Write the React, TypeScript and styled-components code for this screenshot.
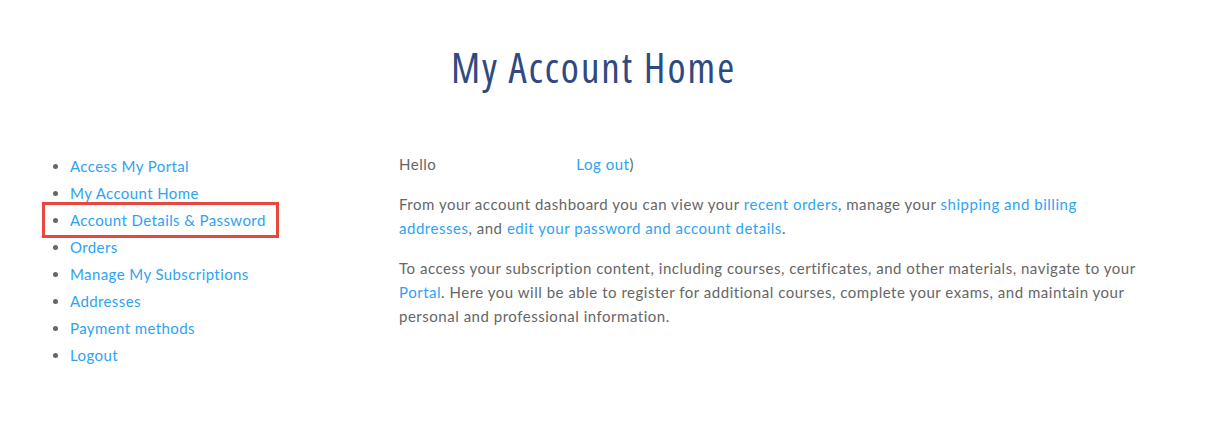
import React from "react";
import styled, { createGlobalStyle } from "styled-components";

const Global = createGlobalStyle`
  html, body { margin: 0; padding: 0; background: #fff; }
  body { font-family: Lato, "Open Sans", sans-serif; color: #666; }
`;

const Page = styled.div`
  width: 1187px;
  padding-top: 41px;
`;

const Title = styled.h1`
  margin: 0;
  text-align: center;
  font-family: "Open Sans", sans-serif;
  font-stretch: condensed;
  font-weight: 400;
  font-size: 41px;
  letter-spacing: 2px;
  line-height: 52px;
  color: #2f4a80;
`;

const Columns = styled.div`
  display: grid;
  grid-template-columns: 399px 745px;
  margin-top: 60px;
`;

const Nav = styled.ul`
  margin: 0;
  padding: 0 0 0 70px;
  list-style: disc;
  font-size: 15px;
  letter-spacing: 0.4px;
  line-height: 27px;
  color: #666;
`;

const NavItem = styled.li<{ $boxed?: boolean }>`
  position: relative;
  &::marker { color: #666; }
  ${(p) =>
    p.$boxed &&
    `&::after {
      content: "";
      position: absolute;
      left: -28px;
      top: -5px;
      width: 237px;
      height: 36px;
      box-sizing: border-box;
      border: 3px solid #e8473e;
    }`}
`;

const Link = styled.a`
  color: #2ea3f2;
  text-decoration: none;
`;

const Content = styled.div`
  margin-top: -1px;
  font-size: 15px;
  letter-spacing: 0.52px;
  line-height: 24px;
  color: #666;
`;

const Para = styled.p`
  margin: 0 0 16px;
`;

const Blank = styled.span`
  display: inline-block;
  width: 140px;
`;

const items = [
  "Access My Portal",
  "My Account Home",
  "Account Details & Password",
  "Orders",
  "Manage My Subscriptions",
  "Addresses",
  "Payment methods",
  "Logout",
];

export default function App() {
  return (
    <Page>
      <Global />
      <Title>My Account Home</Title>
      <Columns>
        <Nav>
          {items.map((t, i) => (
            <NavItem key={t} $boxed={i === 2}>
              <Link href="#">{t}</Link>
            </NavItem>
          ))}
        </Nav>
        <Content>
          <Para>
            Hello<Blank />
            <Link href="#">Log out</Link>)
          </Para>
          <Para>
            From your account dashboard you can view your <Link href="#">recent orders</Link>, manage your{" "}
            <Link href="#">shipping and billing addresses</Link>, and{" "}
            <Link href="#">edit your password and account details</Link>.
          </Para>
          <Para>
            To access your subscription content, including courses, certificates, and other materials, navigate to
            your <Link href="#">Portal</Link>. Here you will be able to register for additional courses, complete your
            exams, and maintain your personal and professional information.
          </Para>
        </Content>
      </Columns>
    </Page>
  );
}
